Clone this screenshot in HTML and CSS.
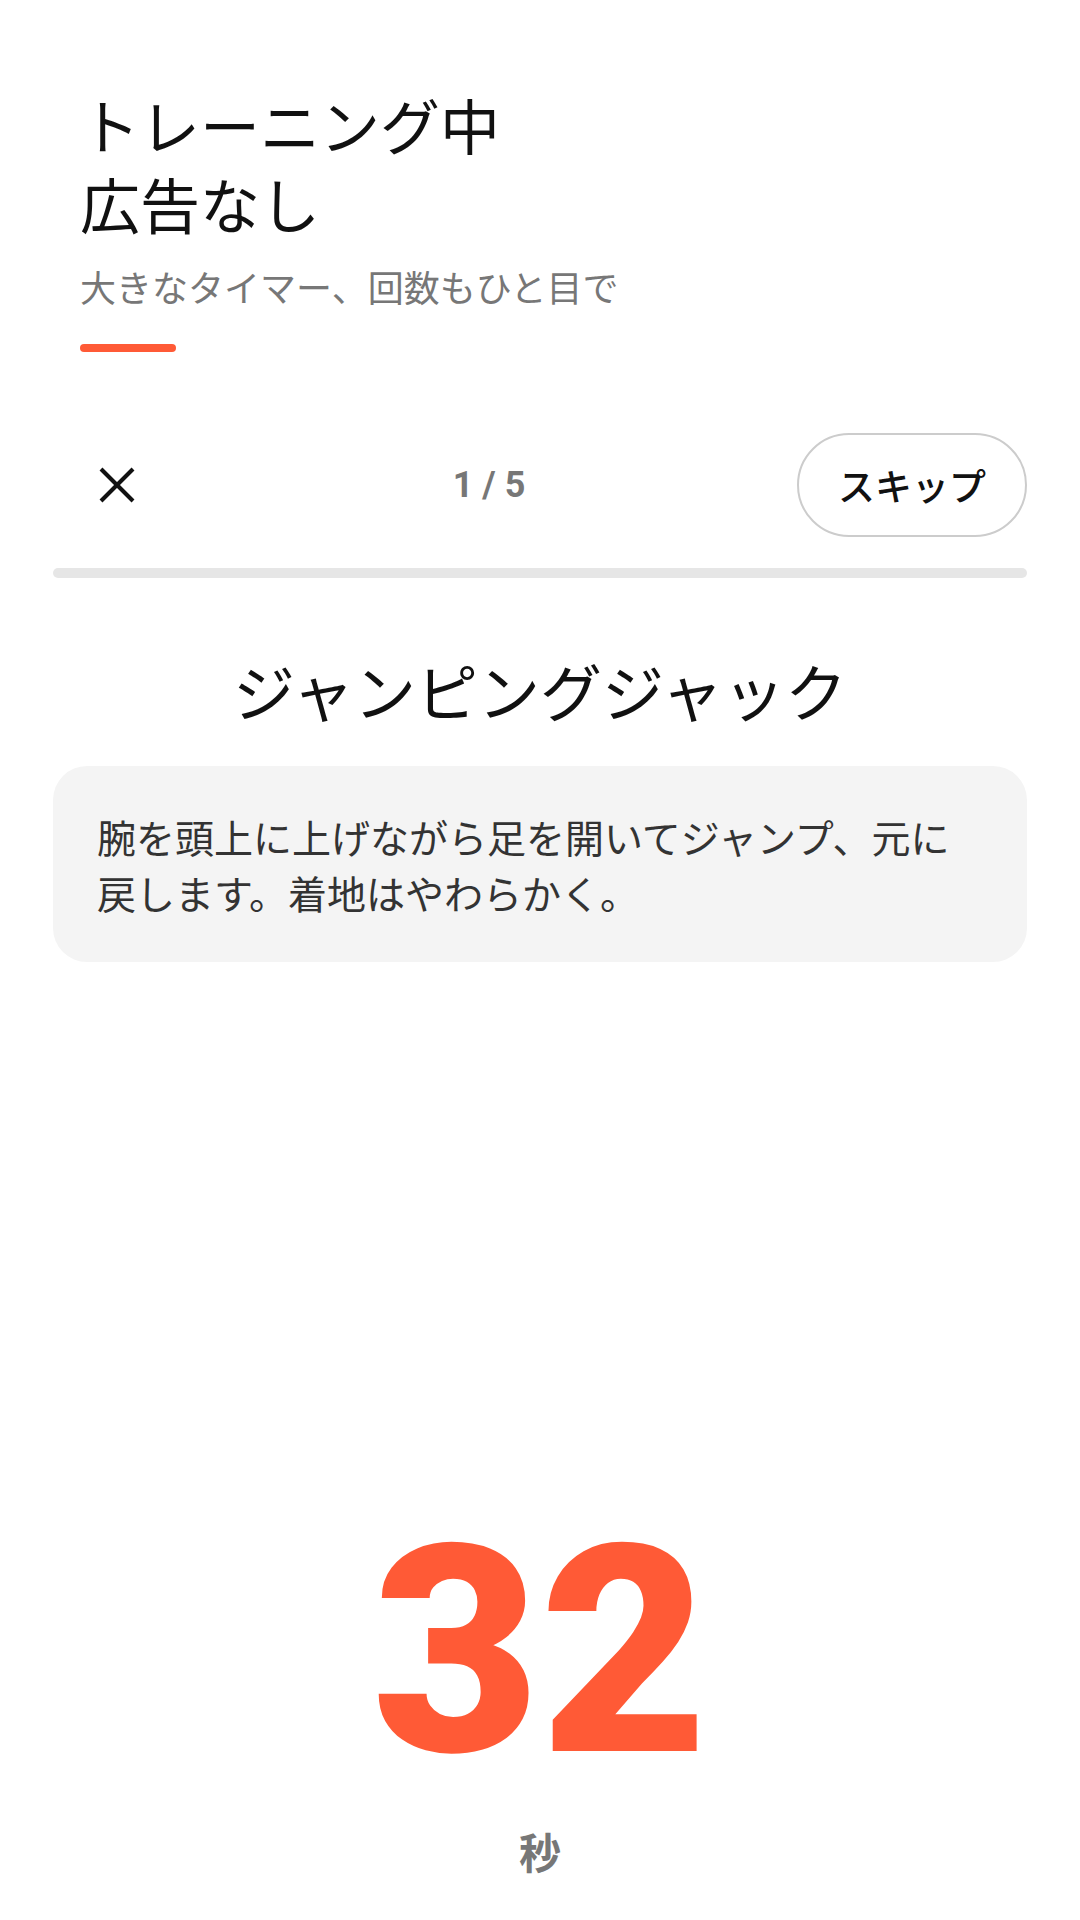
FILE: index.html
```html
<!DOCTYPE html>
<html lang="ja">
<head>
<meta charset="utf-8">
<title>トレーニング中 広告なし</title>
<link rel="stylesheet" href="styles.css">
</head>
<body>
<div class="screen">
  <header class="hero">
    <h1 class="hero-title">トレーニング中<br>広告なし</h1>
    <p class="hero-sub">大きなタイマー、回数もひと目で</p>
    <div class="hero-accent"></div>
  </header>
  <main class="workout">
    <div class="topbar">
      <button class="close-btn" aria-label="閉じる">
        <svg class="close-icon" viewBox="0 0 36 36" width="36" height="36">
          <line x1="2" y1="2" x2="34" y2="34"/>
          <line x1="34" y1="2" x2="2" y2="34"/>
        </svg>
      </button>
      <span class="counter">1 / 5</span>
      <button class="skip-btn">スキップ</button>
    </div>
    <div class="progress"></div>
    <h2 class="exercise-name">ジャンピングジャック</h2>
    <div class="desc-card">
      <p class="desc-text">腕を頭上に上げながら足を開いてジャンプ、元に戻します。着地はやわらかく。</p>
    </div>
    <div class="timer">
      <div class="timer-value">32</div>
      <div class="timer-unit">秒</div>
    </div>
  </main>
</div>
</body>
</html>
```
FILE: styles.css
```css
* { box-sizing: border-box; }
html, body {
  margin: 0;
  padding: 0;
  background: #ffffff;
}
body {
  font-family: Roboto, "Noto Sans CJK JP", sans-serif;
  color: #111111;
}
.screen {
  width: 1080px;
  min-height: 1920px;
  padding: 0 53px;
  display: flex;
  flex-direction: column;
}
.hero {
  padding: 84px 27px 0;
}
.hero-title {
  margin: 0;
  font-family: "Noto Sans CJK JP", sans-serif;
  font-size: 60px;
  line-height: 79px;
  font-weight: 400;
  color: #111111;
}
.hero-sub {
  margin: 19px 0 0;
  font-family: "Noto Sans CJK JP", sans-serif;
  font-size: 36px;
  line-height: 50px;
  color: #777777;
}
.hero-accent {
  margin-top: 33px;
  width: 96px;
  height: 8px;
  border-radius: 4px;
  background: #ff5a36;
}
.workout {
  flex: 1;
  display: flex;
  flex-direction: column;
}
.topbar {
  margin-top: 81px;
  height: 104px;
  display: flex;
  align-items: center;
  justify-content: space-between;
}
.close-btn {
  width: 128px;
  height: 104px;
  padding: 0;
  border: 0;
  background: transparent;
  display: flex;
  align-items: center;
  justify-content: center;
}
.close-icon line {
  stroke: #111111;
  stroke-width: 4;
}
.counter {
  font-family: Roboto, sans-serif;
  font-size: 36px;
  font-weight: 700;
  color: #777777;
}
.skip-btn {
  height: 104px;
  padding: 0 39px;
  border: 2px solid #cccccc;
  border-radius: 52px;
  background: #ffffff;
  font-family: "Noto Sans CJK JP", sans-serif;
  font-size: 37px;
  font-weight: 500;
  color: #111111;
}
.progress {
  margin-top: 31px;
  height: 10px;
  border-radius: 5px;
  background: #e6e6e6;
}
.exercise-name {
  margin: 71px 0 0;
  text-align: center;
  font-family: "Noto Sans CJK JP", sans-serif;
  font-size: 62px;
  line-height: 83px;
  font-weight: 400;
  color: #111111;
}
.desc-card {
  margin-top: 34px;
  padding: 42px 44px;
  border-radius: 34px;
  background: #f4f4f4;
}
.desc-text {
  margin: 0;
  font-family: "Noto Sans CJK JP", sans-serif;
  font-size: 39px;
  line-height: 56px;
  color: #333333;
}
.timer {
  margin-top: auto;
  padding-bottom: 44px;
  display: flex;
  flex-direction: column;
  align-items: center;
}
.timer-value {
  font-family: Roboto, sans-serif;
  font-size: 290px;
  line-height: 290px;
  font-weight: 900;
  color: #ff5a36;
}
.timer-unit {
  margin-top: 29px;
  font-family: "Noto Sans CJK JP", sans-serif;
  font-size: 42px;
  line-height: 50px;
  font-weight: 700;
  color: #777777;
}
```
